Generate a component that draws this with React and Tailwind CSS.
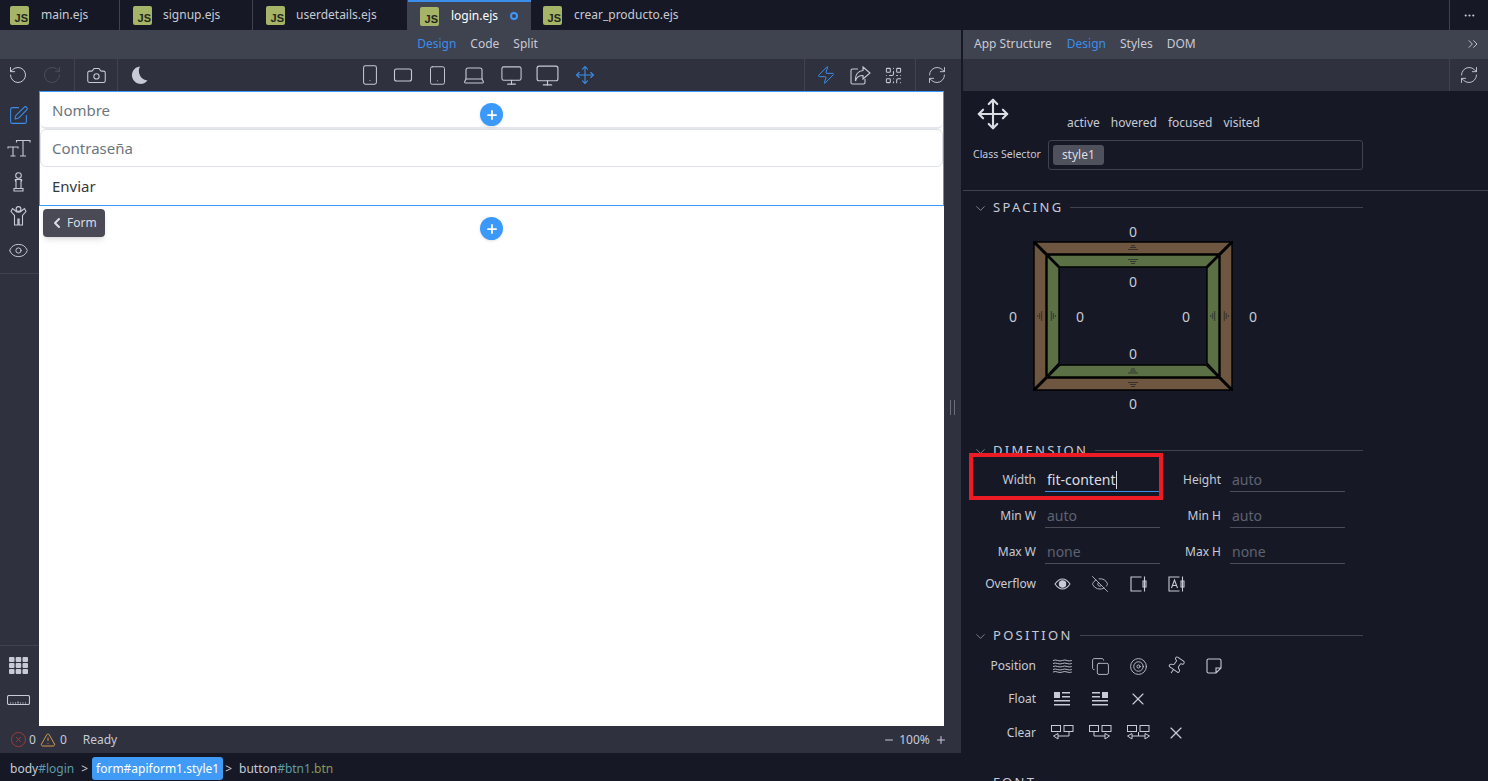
import {
  RotateCcw, RotateCw, Camera, Smartphone, Tablet, Laptop, Monitor, Move, Zap, RefreshCw,
  SquarePen, Eye, EyeOff, Pin, X, ChevronLeft, ChevronDown, ChevronsRight, CircleX, TriangleAlert,
  Plus, Minus, Copy, Target, QrCode, Ellipsis,
} from "lucide-react";

function JsIcon() {
  return (
    <span className="w-[19px] h-[19px] shrink-0 rounded-[2px] bg-[#a5b466] flex items-end justify-end pr-[1px] pb-[1px] font-['Liberation_Sans',sans-serif] text-[11px] leading-[11px] font-bold text-[#23261c]">
      JS
    </span>
  );
}

function FileTab({ name, width, gap, active, modified }) {
  return (
    <div
      className={`relative h-[30px] flex items-center shrink-0 ${width} ${
        active ? "bg-[#3f424f] border-t-2 border-[#3b8eea]" : "border-r border-[#3f424f]"
      }`}
    >
      <JsIcon />
      <span className={`${gap} text-[12px] ${active ? "text-white" : "text-[#c8cad6]"}`}>{name}</span>
      {modified && (
        <span className="ml-[12px] w-2 h-2 rounded-full border-2 border-[#3b99fc]" />
      )}
    </div>
  );
}

function TabsBar() {
  return (
    <div className="h-[30px] flex bg-[#161925] shrink-0">
      <FileTab name="main.ejs" width="w-[120px] pl-[10px]" gap="ml-[12px]" />
      <FileTab name="signup.ejs" width="w-[133px] pl-[13px]" gap="ml-[11px]" />
      <FileTab name="userdetails.ejs" width="w-[155px] pl-[13px]" gap="ml-[11px]" />
      <FileTab name="login.ejs" width="w-[123px] pl-[12px]" gap="ml-[12px]" active modified />
      <div className="h-[30px] flex items-center pl-[12px]">
        <JsIcon />
        <span className="ml-[12px] text-[12px] text-[#c8cad6]">crear_producto.ejs</span>
      </div>
      <div className="ml-auto w-[39px] border-l border-[#3f424f] flex items-center justify-center">
        <Ellipsis size={13} className="text-[#c8cad6]" />
      </div>
    </div>
  );
}

function ShareIcon() {
  return (
    <svg width="21" height="19" viewBox="0 0 21 19" fill="none" stroke="currentColor" strokeWidth="1.1">
      <path d="M8 3H2.5A1.5 1.5 0 0 0 1 4.5v12A1.5 1.5 0 0 0 2.5 18h11a1.5 1.5 0 0 0 1.5-1.5V13" />
      <path d="M13 1l7 6-7 6V9.5C9 9.5 6.5 11 5.5 15 5 9 8 5 13 4.5z" />
    </svg>
  );
}

function Toolbar() {
  const dev = "text-[#c8cad6]";
  return (
    <div className="h-[32px] bg-[#2f323e] flex items-center shrink-0">
      <div className="w-[75px] h-full flex items-center border-r border-[#3f424f] pl-[8px] gap-[14px]">
        <RotateCcw size={20} strokeWidth={1.2} className={dev} />
        <RotateCw size={20} strokeWidth={1.2} className="text-[#4a4d5a]" />
      </div>
      <div className="w-[43px] h-full flex items-center justify-center border-r border-[#3f424f]">
        <Camera size={21} strokeWidth={1.2} className={dev} />
      </div>
      <div className="pl-[12px]">
        <svg width="18" height="18" viewBox="0 0 18 18" fill="#c8cad6" className="block">
          <path d="M10 0.5A8.7 8.7 0 1 0 17.5 14.5 9.5 9.5 0 0 1 10 0.5z" />
        </svg>
      </div>
      <div className="flex items-center ml-[211px] gap-[14px]">
        <Smartphone size={22} strokeWidth={1.1} className={dev} />
        <svg width="20" height="16" viewBox="0 0 20 16" fill="none" stroke="#c8cad6" strokeWidth="1.1" className="-ml-[2px]">
          <rect x="1.5" y="2" width="17" height="12" rx="2" />
        </svg>
        <Tablet size={21} strokeWidth={1.1} className={dev} />
        <Laptop size={24} strokeWidth={1.1} className={dev} />
        <Monitor size={23} strokeWidth={1.1} className={dev} />
        <Monitor size={25} strokeWidth={1.1} className={`${dev} -ml-[2px]`} />
        <Move size={20} strokeWidth={1.3} className="text-[#3b8eea] ml-[1px]" />
      </div>
      <div className="ml-auto w-[157px] h-full flex items-center border-l border-[#3f424f] pl-[11px] pr-[13px]">
        <Zap size={20} strokeWidth={1.2} className="text-[#3b8eea]" />
        <span className="ml-[14px] text-[#c8cad6] flex"><ShareIcon /></span>
        <QrCode size={19} strokeWidth={1.3} className="ml-[13px] text-[#c8cad6]" />
        <div className="ml-[12px] h-[32px] border-l border-[#3f424f] pl-[11px] flex items-center">
          <RefreshCw size={20} strokeWidth={1.1} className={dev} />
        </div>
      </div>
    </div>
  );
}

function TextSizeIcon() {
  return (
    <svg width="24" height="19" viewBox="0 0 24 19" fill="none" stroke="#c8cad6" strokeWidth="1.1">
      <path d="M1 9.5V8h10v1.5M6 8v9M3.5 17h5M9.5 3.5V1.5H23v2M16 1.5V17M13 17h6" />
    </svg>
  );
}

function InfoPieceIcon() {
  return (
    <svg width="13" height="20" viewBox="0 0 13 20" fill="none" stroke="#c8cad6" strokeWidth="1.1">
      <circle cx="6.5" cy="3.5" r="2.8" />
      <path d="M3 7.5h7M4 7.5v9M9 7.5v9M2 19v-2.5h9V19zM3 7.5 4 10M10 7.5 9 10" />
    </svg>
  );
}

function ShirtIcon() {
  return (
    <svg width="17" height="20" viewBox="0 0 17 20" fill="none" stroke="#c8cad6" strokeWidth="1.1">
      <circle cx="8.5" cy="3" r="2.4" />
      <path d="M5 4.5 2.5 2.5 1 5.5l3.5 4V19h3.400v-6h1.200v6h3.400V9.5l3.500-4-1.500-3L12 4.500q-3.500 3.500-7 0z" />
    </svg>
  );
}

function SideRail() {
  return (
    <div className="w-[39px] bg-[#2f323e] flex flex-col items-center shrink-0">
      <div className="w-full flex flex-col items-center border-b border-[#3f424f] pt-[14px] pr-[2px] h-[183px]">
        <SquarePen size={21} strokeWidth={1.2} className="text-[#3b8eea]" />
        <div className="mt-[13px]"><TextSizeIcon /></div>
        <div className="mt-[14px]"><InfoPieceIcon /></div>
        <div className="mt-[14px]"><ShirtIcon /></div>
        <Eye size={21} strokeWidth={1.1} className="mt-[14px] text-[#c8cad6]" />
      </div>
      <div className="mt-auto w-full flex flex-col items-center border-t border-[#3f424f] pt-[11px] pb-[21px] pr-[2px]">
        <svg width="19" height="17" viewBox="0 0 19 17" fill="#c8cad6">
          <rect x="0" y="0" width="5.5" height="5" rx="1" /><rect x="6.7" y="0" width="5.5" height="5" rx="1" /><rect x="13.5" y="0" width="5.5" height="5" rx="1" />
          <rect x="0" y="6" width="5.5" height="5" rx="1" /><rect x="6.7" y="6" width="5.5" height="5" rx="1" /><rect x="13.5" y="6" width="5.5" height="5" rx="1" />
          <rect x="0" y="12" width="5.5" height="5" rx="1" /><rect x="6.7" y="12" width="5.5" height="5" rx="1" /><rect x="13.5" y="12" width="5.5" height="5" rx="1" />
        </svg>
        <svg width="23" height="10" viewBox="0 0 23 10" fill="none" stroke="#c8cad6" strokeWidth="1.1" className="mt-[21px]">
          <rect x="0.5" y="0.5" width="22" height="9" rx="1.5" />
          <path d="M3.5 7.5v1M6 7.5v1M8.5 7.5v1M11 6.5v2M13.5 7.5v1M16 7.5v1M18.5 7.5v1" />
        </svg>
      </div>
    </div>
  );
}

function AddButton({ top }) {
  return (
    <span className={`absolute left-[441px] ${top} w-[23px] h-[23px] rounded-full bg-[#3b99fc] flex items-center justify-center shadow-sm`}>
      <Plus size={14} strokeWidth={3} className="text-white" />
    </span>
  );
}

function Canvas() {
  return (
    <div className="relative flex-1 bg-white">
      <div className="border border-[#3b99fc] h-[115px] flex flex-col">
        <div className="h-[37px] rounded-md border-b-2 border-[#e3e6ea] pl-3 pt-[1px] flex items-center text-[15px] text-[#6c757d]">
          Nombre
        </div>
        <div className="h-[38px] rounded-md border border-[#dee2e6] pl-[11px] flex items-center text-[15px] text-[#6c757d]">
          Contraseña
        </div>
        <div className="flex-1 pl-3 flex items-center text-[15px] text-[#343a40]">
          Enviar
        </div>
      </div>
      <AddButton top="top-[12px]" />
      <AddButton top="top-[126px]" />
      <div className="absolute left-[4px] top-[118px] w-[62px] h-[28px] rounded-[4px] bg-[#4a4a56] shadow-md flex items-center pl-[6px] gap-[2px] text-[12px] text-[#dcdde3]">
        <ChevronLeft size={16} strokeWidth={3} />
        Form
      </div>
    </div>
  );
}

function LeftColumn() {
  return (
    <div className="w-[961px] flex flex-col shrink-0">
      <div className="h-[29px] bg-[#3f424f] flex items-center justify-center gap-[14px] text-[12px] text-[#c8cad6] shrink-0 pr-[6px] pb-[2px]">
        <span className="text-[#3b8eea]">Design</span>
        <span>Code</span>
        <span>Split</span>
      </div>
      <Toolbar />
      <div className="flex-1 flex min-h-0">
        <SideRail />
        <Canvas />
        <div className="w-[17px] bg-[#2f323e] flex items-center justify-center shrink-0">
          <span className="w-[5px] h-[15px] border-x border-[#6a6d7a] mt-[-3px]" />
        </div>
      </div>
      <div className="h-[27px] bg-[#2f323e] flex items-center text-[12px] text-[#c8cad6] shrink-0 pl-[10px]">
        <CircleX size={17} strokeWidth={1.2} className="text-[#b03a3a]" />
        <span className="ml-[2px]">0</span>
        <TriangleAlert size={16} strokeWidth={1.4} className="ml-[4px] text-[#e0a050]" />
        <span className="ml-[4px]">0</span>
        <span className="ml-[16px]">Ready</span>
        <Minus size={12} className="ml-[766px]" />
        <span className="ml-[4px]">100%</span>
        <Plus size={12} className="ml-[5px]" />
      </div>
      <div className="h-[28px] bg-[#161925] flex items-center text-[12px] text-[#c8cad6] shrink-0 pl-[10px] pt-[3px]">
        <span>body<span className="text-[#5c9ba8]">#login</span></span>
        <span className="ml-[7px]">&gt;</span>
        <span className="ml-[4px] h-[23px] px-1 rounded-[3px] bg-[#3f9bf6] text-white flex items-center">form#apiform1.style1</span>
        <span className="ml-[2px]">&gt;</span>
        <span className="ml-[7px]">button<span className="text-[#5c9ba8]">#btn1</span><span className="text-[#8a9a50]">.btn</span></span>
      </div>
    </div>
  );
}

function SectionHeader({ title }) {
  return (
    <div className="h-[18px] flex items-center pl-[10px] pr-[125px]">
      <ChevronDown size={15} strokeWidth={1.2} className="text-[#a0a2ae]" />
      <span className="ml-[5px] text-[13px] tracking-[2.3px] text-[#c8cad6]">{title}</span>
      <span className="ml-[7px] -mt-[2px] flex-1 border-t border-[#3f424f]" />
    </div>
  );
}

function SpacingBox() {
  const brown = "#6f5640";
  const green = "#5c7046";
  const tick = "#2a2a2a";
  const labels = [
    "left-[170px] top-[0px]",
    "left-[170px] top-[50px]",
    "left-[50px] top-[85px]",
    "left-[117px] top-[85px]",
    "left-[223px] top-[85px]",
    "left-[290px] top-[85px]",
    "left-[170px] top-[122px]",
    "left-[170px] top-[172px]",
  ];
  return (
    <div className="relative h-[190px] mt-[6px]">
      <svg className="absolute left-[70px] top-[18px]" width="200" height="150" viewBox="0 0 200 150" stroke="#000" strokeWidth="1.4">
        <polygon points="2,1 198,1 186,13 14,13" fill={brown} />
        <polygon points="1,2 13,14 13,136 1,148" fill={brown} />
        <polygon points="199,2 187,14 187,136 199,148" fill={brown} />
        <polygon points="2,149 198,149 186,137 14,137" fill={brown} />
        <polygon points="15,14 185,14 173,26 27,26" fill={green} />
        <polygon points="14,15 26,27 26,122 14,135" fill={green} />
        <polygon points="186,15 174,27 174,122 186,135" fill={green} />
        <polygon points="15,136 185,136 173,124 27,124" fill={green} />
        <path d="M0 0 14 14M200 0 186 14M0 150 14 136M200 150 186 136" strokeWidth="2.5" />
        <g fill="none">
          <path stroke={tick} strokeWidth="0.8" d="M98 4.700h4M97 6.500h6M95 8.500h10M95 18.500h10M97 20.500h6M98 22.500h4M98 128h4M97 130h6M95 132h10M95 141.500h10M97 143.500h6M98 145.500h4M8.700 70v10M6.700 72v6M4.700 74v2M18.300 70v10M20.300 72v6M22.300 74v2M181.700 70v10M179.700 72v6M177.700 74v2M191.300 70v10M193.300 72v6M195.300 74v2" />
        </g>
      </svg>
      {labels.map((pos, i) => (
        <span key={i} className={`absolute ${pos} w-0 flex justify-center text-[14px] leading-[18px] text-[#c8cad6]`}>0</span>
      ))}
    </div>
  );
}

function Field({ label, value, focused, placeholder }) {
  return (
    <div className="flex items-center h-[24px]">
      <span className="w-[73px] text-right text-[12px] text-[#c8cad6]">{label}</span>
      <div className={`ml-[9px] w-[115px] h-[24px] pl-[2px] flex items-center border-b text-[14px] ${focused ? "border-[#3b8eea] text-[#dcdde3]" : "border-[#4a4d5a] text-[#5f6270]"}`}>
        {value || placeholder}
        {focused && <span className="w-px h-[18px] bg-[#dcdde3]" />}
      </div>
    </div>
  );
}

function FieldRow({ left, right, className }) {
  return (
    <div className={`flex ${className}`}>
      <Field {...left} />
      <div className="-ml-[12px]"><Field {...right} /></div>
    </div>
  );
}

function IconRow({ label, className, children }) {
  return (
    <div className={`flex items-center h-[24px] ${className}`}>
      <span className="w-[73px] text-right text-[12px] text-[#c8cad6]">{label}</span>
      <div className="ml-[7px] flex items-center text-[#c8cad6]">{children}</div>
    </div>
  );
}

const Slot = ({ children }) => <span className="w-[38px] flex justify-center">{children}</span>;

function ClearIcon({ dir }) {
  return (
    <svg width="23" height="16" viewBox="0 0 23 16" fill="none" stroke="#c8cad6" strokeWidth="1">
      <rect x="0.5" y="0.5" width="9" height="6" />
      <rect x="13" y="0.5" width="9" height="6" />
      {dir === "left" && <path d="M18 7v4H7M7 8.500 2.500 11 7 14z" />}
      {dir === "right" && <path d="M5 7v4h11M16 8.500 20.500 11 16 14z" />}
    </svg>
  );
}

function RightPanel() {
  return (
    <div className="flex-1 flex flex-col min-w-0 border-l-2 border-[#161925]">
      <div className="h-[29px] bg-[#3f424f] flex items-center pl-[11px] pb-[2px] text-[12px] text-[#c8cad6] shrink-0">
        <span>App Structure</span>
        <span className="ml-[15px] text-[#3b8eea]">Design</span>
        <span className="ml-[14px]">Styles</span>
        <span className="ml-[14px]">DOM</span>
        <ChevronsRight size={16} strokeWidth={1.4} className="ml-auto mr-[7px]" />
      </div>
      <div className="h-[32px] bg-[#2f323e] flex justify-end shrink-0">
        <div className="w-[39px] border-l border-[#3f424f] flex items-center justify-center">
          <RefreshCw size={20} strokeWidth={1.1} className="text-[#c8cad6]" />
        </div>
      </div>
      <div className="flex-1 bg-[#161925] overflow-hidden relative">
        <div className="h-[100px] border-b border-[#3f424f] pt-[6px] pl-[13px]">
          <div className="flex items-end h-[34px]">
            <Move size={34} strokeWidth={1.5} className="text-[#dcdde3]" />
            <div className="ml-[57px] -mb-[1px] flex gap-[11px] text-[12px] leading-[18px] text-[#c8cad6]">
              <span>active</span><span>hovered</span><span>focused</span><span>visited</span>
            </div>
          </div>
          <div className="mt-[9px] flex items-center">
            <span className="-ml-[3px] text-[10.5px] text-[#c8cad6]">Class Selector</span>
            <div className="ml-[7px] w-[315px] h-[30px] rounded-[3px] border border-[#3f424f] flex items-center pl-[4px]">
              <span className="h-5 px-[9px] rounded-[3px] bg-[#4f515c] flex items-center text-[12px] text-[#dcdde3]">style1</span>
            </div>
          </div>
        </div>
        <div className="pt-[8px]">
          <SectionHeader title="SPACING" />
          <SpacingBox />
        </div>
        <div className="mt-[29px]">
          <SectionHeader title="DIMENSION" />
          <FieldRow className="mt-[8px]" left={{ label: "Width", value: "fit-content", focused: true }} right={{ label: "Height", placeholder: "auto" }} />
          <FieldRow className="mt-[12px]" left={{ label: "Min W", placeholder: "auto" }} right={{ label: "Min H", placeholder: "auto" }} />
          <FieldRow className="mt-[12px]" left={{ label: "Max W", placeholder: "none" }} right={{ label: "Max H", placeholder: "none" }} />
          <IconRow label="Overflow" className="mt-[8px]">
            <Slot>
              <svg width="17" height="12" viewBox="0 0 17 12" fill="none" stroke="#c8cad6" strokeWidth="1.1">
                <path d="M1 6q3.500-5 7.500-5t7.500 5q-3.500 5-7.500 5T1 6z" />
                <circle cx="8.5" cy="6" r="3.2" fill="#c8cad6" />
              </svg>
            </Slot>
            <Slot><EyeOff size={18} strokeWidth={1.1} /></Slot>
            <Slot>
              <svg width="17" height="16" viewBox="0 0 17 16" fill="none" stroke="#c8cad6" strokeWidth="1.1">
                <path d="M11.5 1H1v14h10.5" /><path d="M14.5 0.5v15M13 5h3v6h-3z" />
              </svg>
            </Slot>
            <Slot>
              <svg width="17" height="16" viewBox="0 0 17 16" fill="none" stroke="#c8cad6" strokeWidth="1.1">
                <path d="M11.5 1H1v14h10.5M3.5 12 6.5 4 9.5 12M4.5 9.5h4" /><path d="M14.5 0.5v15M13 5h3v6h-3z" />
              </svg>
            </Slot>
          </IconRow>
        </div>
        <div className="mt-[31px]">
          <SectionHeader title="POSITION" />
          <IconRow label="Position" className="mt-[9px]">
            <Slot>
              <svg width="19" height="14" viewBox="0 0 19 14" fill="none" stroke="#c8cad6" strokeWidth="0.9">
                <path d="M0 1.5q2.4-1 4.7 0t4.7 0 4.7 0 4.7 0M0 4.5q2.4-1 4.7 0t4.7 0 4.7 0 4.7 0M0 7.5q2.4-1 4.7 0t4.7 0 4.7 0 4.7 0M0 10.5q2.4-1 4.7 0t4.7 0 4.7 0 4.7 0M0 13q2.4-1 4.7 0t4.7 0 4.7 0 4.7 0" />
              </svg>
            </Slot>
            <Slot><Copy size={19} strokeWidth={1.1} /></Slot>
            <Slot><Target size={19} strokeWidth={1.1} /></Slot>
            <Slot><Pin size={20} strokeWidth={1.1} className="rotate-[35deg]" /></Slot>
            <Slot>
              <svg width="16" height="16" viewBox="0 0 16 16" fill="none" stroke="#c8cad6" strokeWidth="1.1">
                <path d="M2.5 1h11A1.5 1.5 0 0 1 15 2.5V10l-5 5H2.5A1.5 1.5 0 0 1 1 13.5v-11A1.5 1.5 0 0 1 2.5 1zM15 10h-5v5" />
              </svg>
            </Slot>
          </IconRow>
          <IconRow label="Float" className="mt-[9px]">
            <Slot>
              <svg width="16" height="14" viewBox="0 0 16 14" fill="#c8cad6">
                <rect x="0" y="0" width="6" height="6" /><rect x="8" y="0" width="8" height="1.5" /><rect x="8" y="4" width="8" height="1.5" /><rect x="0" y="8" width="16" height="1.5" /><rect x="0" y="12" width="16" height="1.5" />
              </svg>
            </Slot>
            <Slot>
              <svg width="16" height="14" viewBox="0 0 16 14" fill="#c8cad6">
                <rect x="10" y="0" width="6" height="6" /><rect x="0" y="0" width="8" height="1.5" /><rect x="0" y="4" width="8" height="1.5" /><rect x="0" y="8" width="16" height="1.5" /><rect x="0" y="12" width="16" height="1.5" />
              </svg>
            </Slot>
            <Slot><X size={20} strokeWidth={1.4} /></Slot>
          </IconRow>
          <IconRow label="Clear" className="mt-[10px]">
            <Slot><ClearIcon dir="left" /></Slot>
            <Slot><ClearIcon dir="right" /></Slot>
            <Slot>
              <svg width="23" height="16" viewBox="0 0 23 16" fill="none" stroke="#c8cad6" strokeWidth="1">
                <rect x="0.5" y="0.5" width="9" height="6" />
                <rect x="13" y="0.5" width="9" height="6" />
                <path d="M5 8.500 0.500 11 5 14zM18 8.500 22.500 11 18 14zM5 11h13M11.500 7v4" />
              </svg>
            </Slot>
            <Slot><X size={20} strokeWidth={1.4} /></Slot>
          </IconRow>
        </div>
        <div className="mt-[29px]">
          <SectionHeader title="FONT" />
        </div>
        {/* red annotation over the width field */}
        <div className="absolute left-[6px] top-[362px] w-[194px] h-[47px] border-4 border-[#ed1c24]" />
      </div>
    </div>
  );
}

export default function App() {
  return (
    <div className="w-[1488px] h-[781px] flex flex-col overflow-hidden bg-[#161925] font-['Noto_Sans','Open_Sans',sans-serif]">
      <TabsBar />
      <div className="flex-1 flex min-h-0">
        <LeftColumn />
        <RightPanel />
      </div>
    </div>
  );
}
